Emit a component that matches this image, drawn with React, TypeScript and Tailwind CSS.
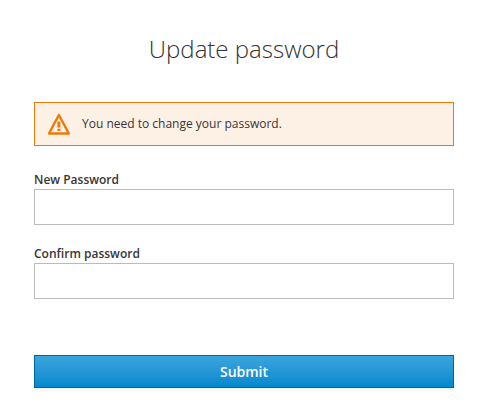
const WarningIcon = () => (
  <svg width="24" height="22" viewBox="0 0 24 22" fill="none" className="shrink-0">
    <path d="M11.9 2 L21.8 20.5 H2 Z" stroke="#ec7a08" strokeWidth="2.4" strokeLinejoin="round" fill="none" />
    <rect x="10.4" y="8.5" width="3" height="6" rx="0.5" fill="#ec7a08" />
    <rect x="10.4" y="15.8" width="3" height="2.2" fill="#ec7a08" />
  </svg>
);

const Field = ({ label, id }: { label: string; id: string }) => (
  <div className="flex flex-col">
    <label htmlFor={id} className="pt-[1px] text-[12px] leading-[19px] font-semibold text-[#363636]">
      {label}
    </label>
    <input
      id={id}
      type="password"
      className="block h-[36px] w-full border border-[#bbbbbb] bg-white px-2 outline-none"
    />
  </div>
);

export default function App() {
  return (
    <div className="min-h-[407px] bg-white px-[34px] font-['Open_Sans',sans-serif] text-[#363636]">
      <h1 className="pt-[32px] text-center text-[24px] leading-[33px] font-light text-[#333333]">
        Update password
      </h1>
      <div className="mt-[37px] flex h-[44px] w-[420px] items-center gap-[11px] border border-[#ec7a08] bg-[#fdf0e5] pl-[12px]">
        <WarningIcon />
        <span className="text-[12px]">You need to change your password.</span>
      </div>
      <div className="mt-[23px] flex w-[420px] flex-col gap-[18px]">
        <Field label="New Password" id="password-new" />
        <Field label="Confirm password" id="password-confirm" />
      </div>
      <button className="mt-[56px] h-[33px] w-[420px] border border-[#00659c] bg-gradient-to-b from-[#39a5dc] to-[#0088ce] text-[14px] font-semibold text-white shadow-[0_2px_4px_rgba(0,0,0,0.06)]">
        Submit
      </button>
    </div>
  );
}
